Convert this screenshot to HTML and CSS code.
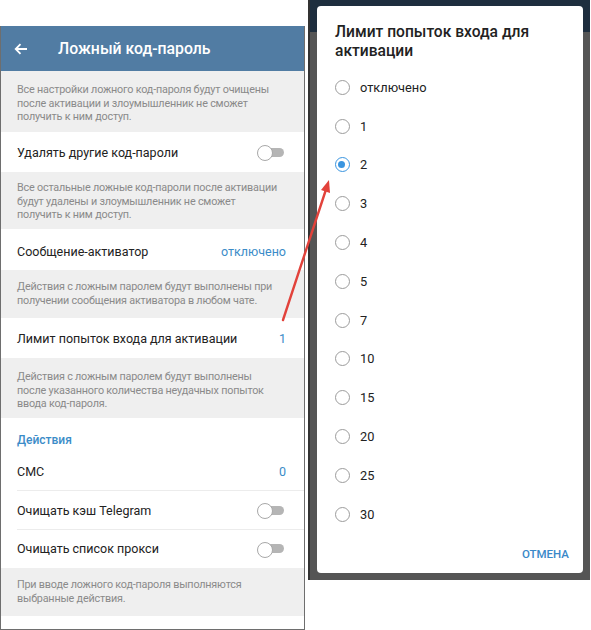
FILE: index.html
```html
<!DOCTYPE html>
<html lang="ru">
<head>
<meta charset="utf-8">
<link rel="stylesheet" href="styles.css">
</head>
<body>
<div class="page">
  <div class="phone">
    <div class="header">
      <svg class="back" width="14" height="12" viewBox="0 0 14 12"><path d="M13 6H2M6.5 1.2L1.7 6l4.8 4.8" fill="none" stroke="#fff" stroke-width="1.8"/></svg>
      <span class="title">Ложный код-пароль</span>
    </div>
    <div class="info i1">Все настройки ложного код-пароля будут очищены<br>после активации и злоумышленник не сможет<br>получить к ним доступ.</div>
    <div class="row r1"><span>Удалять другие код-пароли</span><span class="toggle"></span></div>
    <div class="info i2">Все остальные ложные код-пароли после активации<br>будут удалены и злоумышленник не сможет<br>получить к ним доступ.</div>
    <div class="row r2"><span>Сообщение-активатор</span><span class="val">отключено</span></div>
    <div class="info i3">Действия с ложным паролем будут выполнены при<br>получении сообщения активатора в любом чате.</div>
    <div class="row r3"><span>Лимит попыток входа для активации</span><span class="val">1</span></div>
    <div class="info i4">Действия с ложным паролем будут выполнены<br>после указанного количества неудачных попыток<br>ввода код-пароля.</div>
    <div class="section">Действия</div>
    <div class="row ar div"><span>СМС</span><span class="val">0</span></div>
    <div class="row ar div"><span>Очищать кэш Telegram</span><span class="toggle"></span></div>
    <div class="row ar"><span>Очищать список прокси</span><span class="toggle"></span></div>
    <div class="info i5">При вводе ложного код-пароля выполняются<br>выбранные действия.</div>
    <div class="tail"></div>
  </div>
  <div class="frame">
    <div class="dialog">
      <div class="dtitle">Лимит попыток входа для активации</div>
      <div class="opts">
        <div class="opt"><span class="radio"></span>отключено</div>
        <div class="opt"><span class="radio"></span>1</div>
        <div class="opt"><span class="radio on"></span>2</div>
        <div class="opt"><span class="radio"></span>3</div>
        <div class="opt"><span class="radio"></span>4</div>
        <div class="opt"><span class="radio"></span>5</div>
        <div class="opt"><span class="radio"></span>7</div>
        <div class="opt"><span class="radio"></span>10</div>
        <div class="opt"><span class="radio"></span>15</div>
        <div class="opt"><span class="radio"></span>20</div>
        <div class="opt"><span class="radio"></span>25</div>
        <div class="opt"><span class="radio"></span>30</div>
      </div>
      <div class="actions"><span class="cancel">ОТМЕНА</span></div>
    </div>
  </div>
  <svg class="arrow" width="591" height="630" viewBox="0 0 591 630">
    <line x1="283" y1="320" x2="325.5" y2="191" stroke="#e2423b" stroke-width="2.4" stroke-linecap="round"/>
    <polygon points="329,180 330,193 321,190" fill="#e2423b"/>
  </svg>
</div>
</body>
</html>
```

FILE: styles.css
```css
* { box-sizing: border-box; }
html, body { margin: 0; padding: 0; background: #fff; }
body { font-family: Roboto, "Noto Sans", sans-serif; width: 591px; height: 630px; overflow: hidden; }
.page { position: relative; display: flex; align-items: flex-start; width: 591px; height: 630px; }

.phone {
  width: 305px;
  margin-top: 26px;
  border: 1px solid #6e6e6e;
  border-top: none;
  background: #fff;
  display: flex;
  flex-direction: column;
}
.header {
  height: 45px;
  background: #517ca3;
  display: flex;
  align-items: center;
  padding-left: 13px;
  color: #fff;
}
.back { margin-top: 1px; }
.title { margin-left: 30px; font-size: 15.8px; font-weight: 500; }

.info {
  background: #efefef;
  color: #8a8a8a;
  font-size: 10.8px;
  letter-spacing: -0.2px;
  line-height: 13.5px;
  padding: 0 2px 0 16px;
  white-space: nowrap;
}
.i1 { height: 61px; padding-top: 12px; }
.i2 { height: 57px; padding-top: 9px; }
.i3 { height: 48px; padding-top: 10px; }
.i4 { height: 60px; padding-top: 12px; }
.i5 { height: 48px; padding-top: 10px; }

.row {
  display: flex;
  align-items: center;
  justify-content: space-between;
  padding: 0 18px 0 16px;
  font-size: 12.5px;
  color: #222;
  background: #fff;
}
.r1 { height: 40px; }
.r2 { height: 41px; padding-top: 3px; }
.r3 { height: 40px; padding-top: 1px; }
.ar { height: 38.5px; position: relative; }
.div::after {
  content: "";
  position: absolute;
  left: 16px; right: 0; bottom: 0;
  height: 1px;
  background: #ececec;
}
.val { color: #3b8cc8; }
.section {
  height: 34.5px;
  padding: 15px 16px 0;
  color: #3b8cc8;
  font-size: 12px;
  font-weight: 500;
}
.tail { height: 13px; background: #fff; }

.toggle {
  position: relative;
  width: 27px;
  height: 14px;
  margin-right: 2px;
}
.toggle::before {
  content: "";
  position: absolute;
  left: 3px; right: 0; top: 2.5px;
  height: 9px;
  border-radius: 5px;
  background: #b5b5b5;
}
.toggle::after {
  content: "";
  position: absolute;
  left: 0; top: 0;
  width: 14px; height: 14px;
  border-radius: 50%;
  background: #fff;
  border: 1.5px solid #a8a8a8;
}

.frame {
  margin-left: 3px;
  width: 282px;
  height: 580px;
  background: linear-gradient(#1e2e3e 0, #1e2e3e 32px, #555 32px);
  border-left: 2px solid #333;
  padding: 6px 7px 7px 7px;
}
.dialog {
  background: #fff;
  border-radius: 4px;
  height: 567px;
  display: flex;
  flex-direction: column;
}
.dtitle {
  padding: 17px 40px 0 18px;
  font-size: 15.6px;
  font-weight: 500;
  line-height: 19px;
  color: #222;
}
.opts { margin-top: 7px; }
.opt {
  height: 38.8px;
  display: flex;
  align-items: center;
  padding-left: 18px;
  font-size: 12.8px;
  color: #222;
}
.radio {
  width: 15px; height: 15px;
  border-radius: 50%;
  border: 1.8px solid #9c9c9c;
  margin-right: 10px;
  position: relative;
}
.radio.on { border-color: #3a95e0; }
.radio.on::after {
  content: "";
  position: absolute;
  left: 2.2px; top: 2.2px;
  width: 7px; height: 7px;
  border-radius: 50%;
  background: #3a95e0;
}
.actions {
  display: flex;
  justify-content: flex-end;
  padding: 13px 14px 0 0;
}
.cancel { color: #3a88c8; font-size: 11.5px; font-weight: 500; }

.arrow { position: absolute; left: 0; top: 0; pointer-events: none; }
```
